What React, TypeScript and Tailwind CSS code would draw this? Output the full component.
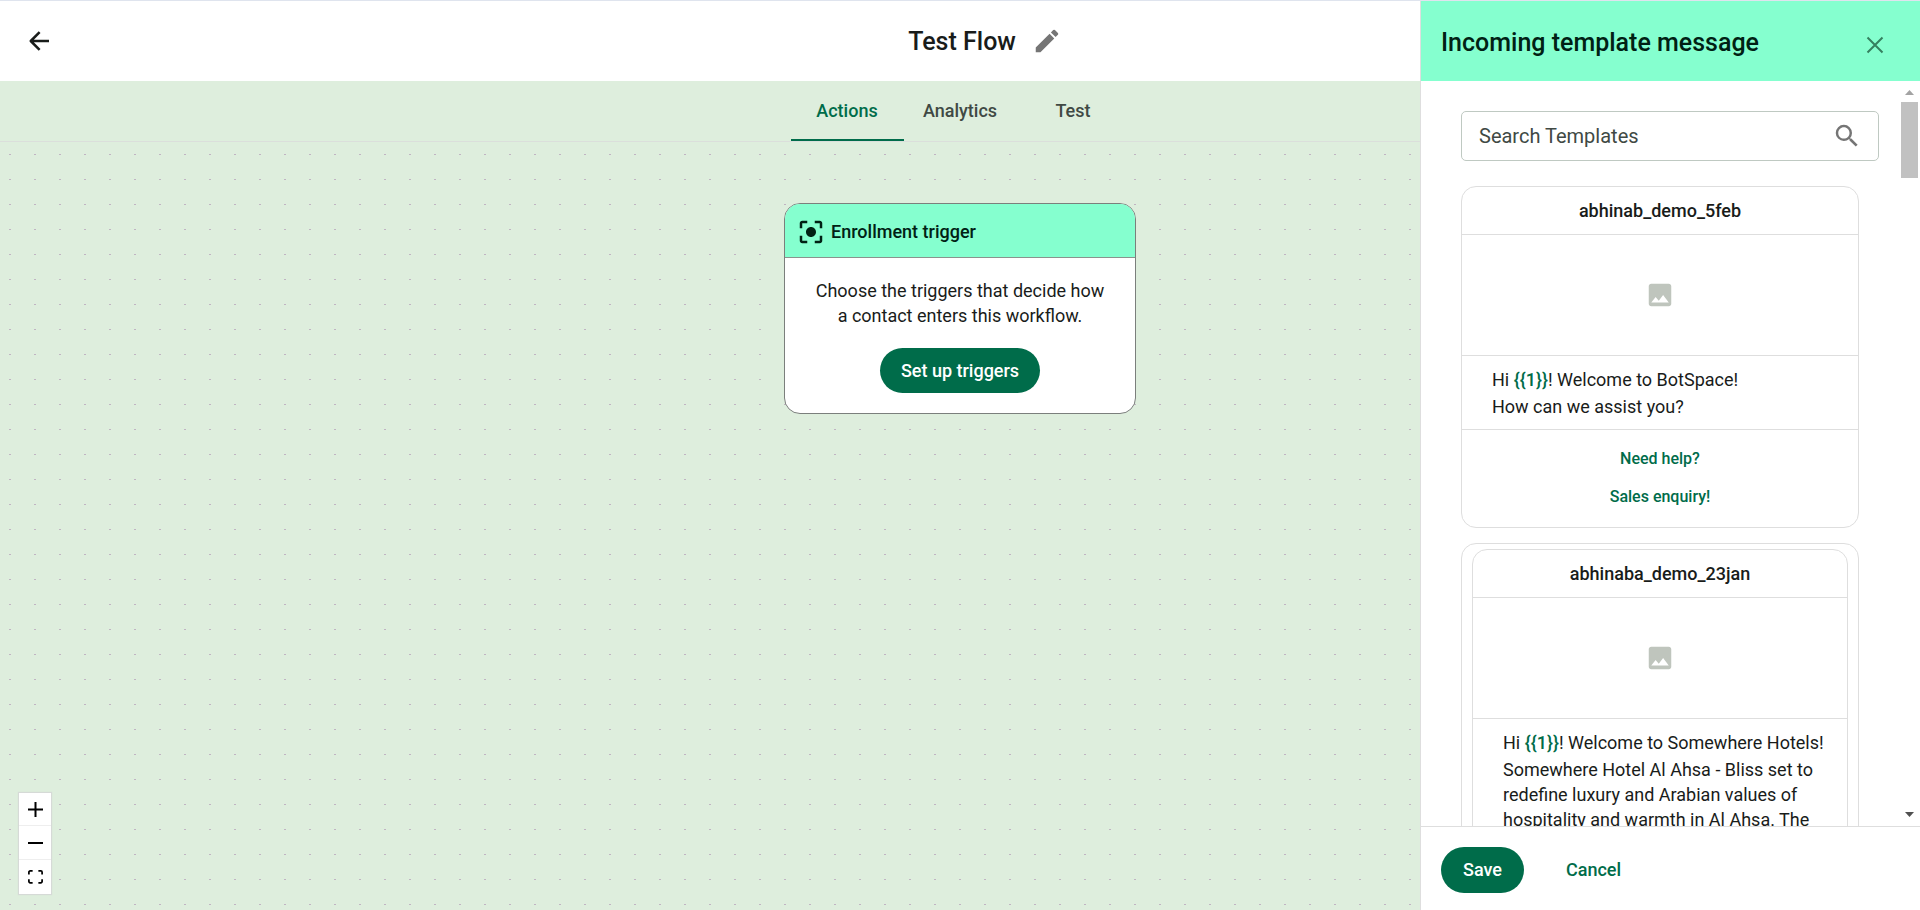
import type { ReactNode } from 'react'
import { MdCenterFocusStrong, MdCreate, MdImage, MdSearch } from 'react-icons/md'

const tabs = ['Actions', 'Analytics', 'Test']

function BackIcon() {
  return (
    <svg width="30" height="30" viewBox="0 0 24 24" fill="none" stroke="currentColor" strokeWidth="2" aria-hidden>
      <path d="M12.5 4.9 5.4 12l7.1 7.1M5.4 12H20" strokeLinejoin="round" />
    </svg>
  )
}

function CloseIcon() {
  return (
    <svg width="18" height="18" viewBox="0 0 18 18" fill="none" stroke="currentColor" strokeWidth="2" aria-hidden>
      <path d="m1.5 1.5 15 15m0-15-15 15" />
    </svg>
  )
}

function FitIcon() {
  return (
    <svg width="15" height="14" viewBox="0 0 32 30" fill="currentColor" aria-hidden>
      <path d="M3.692 4.63c0-.53.4-.938.939-.938h5.215V0H4.708C2.13 0 0 2.054 0 4.63v5.216h3.692V4.631zM27.354 0h-5.2v3.692h5.17c.53 0 .984.4.984.939v5.215H32V4.631A4.624 4.624 0 0027.354 0zm.954 24.83c0 .532-.4.94-.939.94h-5.215v3.768h5.215c2.577 0 4.631-2.13 4.631-4.707v-5.139h-3.692v5.139zm-23.677.94c-.531 0-.939-.4-.939-.94v-5.138H0v5.139c0 2.577 2.13 4.707 4.708 4.707h5.138V25.77H4.631z" />
    </svg>
  )
}

function FlowCanvas() {
  return (
    <main className="relative flex-1 overflow-hidden">
      <svg className="absolute inset-0 h-full w-full" aria-hidden>
        <pattern id="dots" width="25" height="25" patternUnits="userSpaceOnUse">
          <rect x="9" y="12" width="2" height="1" fill="#c0b4c2" />
        </pattern>
        <rect width="100%" height="100%" fill="url(#dots)" />
      </svg>

      <div className="relative flex justify-center pt-[61px]">
        <section className="w-[352px] overflow-hidden rounded-2xl border border-[#7b7f7c] bg-white">
          <header className="flex h-[54px] items-center gap-[5px] border-b border-[#8a938d] bg-[#85ffcf] px-[11px] pt-[2px] text-[#002114]">
            <MdCenterFocusStrong size={30} aria-hidden />
            <h2 className="text-[18px] font-medium">Enrollment trigger</h2>
          </header>
          <div className="flex flex-col items-center px-6 py-5">
            <p className="text-center text-[18px] leading-[25px] text-[#191c1a]">
              Choose the triggers that decide how
              <br />a contact enters this workflow.
            </p>
            <button
              type="button"
              className="mt-5 h-[45px] rounded-full bg-[#006c4a] px-[21px] text-[18px] font-medium text-white"
            >
              Set up triggers
            </button>
          </div>
        </section>
      </div>

      <div className="absolute bottom-4 left-[19px] flex flex-col divide-y divide-[#eeeeee] bg-white text-black shadow-[0_0_1px_1px_#d6dad7]">
        <button type="button" aria-label="Zoom in" className="grid h-[33px] w-8 place-items-center">
          <svg width="15" height="15" viewBox="0 0 15 15" fill="currentColor" aria-hidden>
            <path d="M0 6.500h15v2H0zM6.500 0h2v15h-2z" />
          </svg>
        </button>
        <button type="button" aria-label="Zoom out" className="grid h-[34px] w-8 place-items-center">
          <svg width="15" height="2" viewBox="0 0 15 2" fill="currentColor" aria-hidden>
            <path d="M0 0h15v2H0z" />
          </svg>
        </button>
        <button type="button" aria-label="Fit view" className="grid h-[34px] w-8 place-items-center">
          <FitIcon />
        </button>
      </div>
    </main>
  )
}

function Preview({ name, children }: { name: string; children: ReactNode }) {
  return (
    <>
      <h3 className="flex h-12 items-center justify-center border-b border-[#dedede] text-[18px] font-medium text-[#191c1a]">
        {name}
      </h3>
      <div className="grid h-[121px] place-items-center border-b border-[#dedede] text-[#bfc5bd]">
        <MdImage size={30} aria-hidden />
      </div>
      <div className="pt-[11px] pr-5 pb-[10px] pl-[30px] text-[18px] leading-[25px] text-[#191c1a]">{children}</div>
    </>
  )
}

function Variable() {
  return <span className="font-medium text-[#006c4a]">{'{{1}}'}</span>
}

function TemplatePanel() {
  return (
    <aside className="absolute inset-y-0 right-0 flex w-[500px] flex-col border-l border-[#dedede] bg-white">
      <header className="flex h-20 shrink-0 items-center justify-between bg-[#85ffcf] pt-1 pr-9 pl-5 text-[#002114]">
        <h2 className="text-[25px] font-medium">Incoming template message</h2>
        <button type="button" aria-label="Close" className="mt-1 text-[#35805f]">
          <CloseIcon />
        </button>
      </header>

      <div className="flex min-h-0 flex-1">
        <div className="min-w-0 flex-1 overflow-y-auto pt-[30px] pr-[22px] pl-10 [scrollbar-width:none]">
          <label className="flex h-[50px] items-center rounded-[5px] border border-[#bfc9c2] pr-4 pl-[17px]">
            <input
              type="text"
              aria-label="Search Templates"
              placeholder="Search Templates"
              className="min-w-0 flex-1 text-[20px] outline-none placeholder:text-[#404944]"
            />
            <MdSearch size={30} className="text-[#757575]" aria-hidden />
          </label>

          <div className="mt-[25px] mr-5 flex flex-col gap-[15px]">
            <article className="overflow-hidden rounded-[15px] border border-[#dedede]">
              <Preview name="abhinab_demo_5feb">
                <p className="pb-[2px]">
                  Hi <Variable />! Welcome to BotSpace!
                </p>
                <p>How can we assist you?</p>
              </Preview>
              <div className="flex flex-col items-center border-t border-[#dedede] pt-[10px] pb-[11px] text-[16px] font-medium text-[#006c4a]">
                <button type="button" className="h-[38px]">
                  Need help?
                </button>
                <button type="button" className="h-[38px]">
                  Sales enquiry!
                </button>
              </div>
            </article>

            <article className="rounded-[15px] border border-[#dedede] px-[10px] py-[5px]">
              <div className="overflow-hidden rounded-[15px] border border-[#dedede]">
                <Preview name="abhinaba_demo_23jan">
                  <p className="pb-[2px]">
                    Hi <Variable />! Welcome to Somewhere Hotels!
                  </p>
                  <p>
                    Somewhere Hotel Al Ahsa - Bliss set to redefine luxury and Arabian values of hospitality and
                    warmth in Al Ahsa. The
                  </p>
                </Preview>
              </div>
            </article>
          </div>
        </div>

        <div className="flex w-[19px] shrink-0 flex-col items-center pt-[9px] pr-[2px] pb-[9px]" aria-hidden>
          <svg width="9" height="5" viewBox="0 0 9 5" fill="#a3a3a3">
            <path d="M4.500 0 9 5H0z" />
          </svg>
          <div className="mt-[7px] h-[76px] w-[17px] bg-[#c1c1c1]" />
          <svg className="mt-auto" width="9" height="5" viewBox="0 0 9 5" fill="#505050">
            <path d="M4.500 5 9 0H0z" />
          </svg>
        </div>
      </div>

      <footer className="flex h-[84px] shrink-0 items-center gap-5 border-t border-[#dedede] pt-[2px] pl-5 text-[18px] font-medium">
        <button type="button" className="h-[46px] rounded-full bg-[#006c4a] px-[22px] text-white">
          Save
        </button>
        <button type="button" className="h-[46px] px-[22px] text-[#006c4a]">
          Cancel
        </button>
      </footer>
    </aside>
  )
}

export default function App() {
  return (
    <div className="relative flex h-screen flex-col overflow-hidden border-t border-[#dfe4ee] bg-[#deeedd] font-['Roboto',sans-serif]">
      <header className="grid h-20 shrink-0 grid-cols-[1fr_auto_1fr] items-center bg-white pr-5 pl-6 text-[#191c1a]">
        <button type="button" aria-label="Back" className="justify-self-start">
          <BackIcon />
        </button>
        <h1 className="pt-[2px] text-[25px] font-medium">Test Flow</h1>
        <button type="button" aria-label="Rename flow" className="ml-4 justify-self-start text-[#757575]">
          <MdCreate size={30} aria-hidden />
        </button>
      </header>

      <nav className="flex h-[61px] shrink-0 justify-center border-b border-[#dbdfdb] text-[18px] font-medium">
        {tabs.map((tab, i) => (
          <a
            key={tab}
            href={`#${tab.toLowerCase()}`}
            aria-current={i === 0 ? 'page' : undefined}
            className={
              i === 0
                ? 'flex w-[113px] items-center justify-center border-b-2 border-[#006c4a] text-[#006c4a]'
                : 'flex w-[113px] items-center justify-center border-b-2 border-transparent text-[#404944]'
            }
          >
            {tab}
          </a>
        ))}
      </nav>

      <FlowCanvas />
      <TemplatePanel />
    </div>
  )
}
